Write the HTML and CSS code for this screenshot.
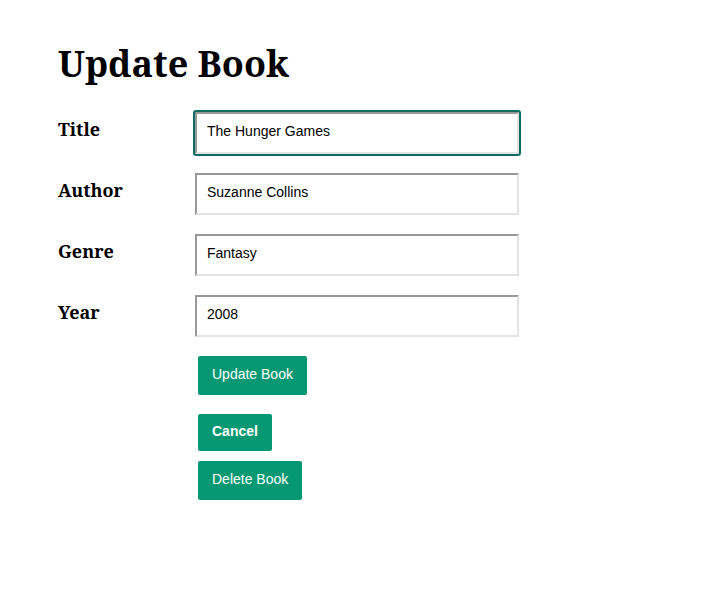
FILE: index.html
```html
<!DOCTYPE html>
<html>
<head>
<meta charset="utf-8">
<link rel="stylesheet" href="styles.css">
</head>
<body>
<main class="page">
  <h1 class="title">Update Book</h1>
  <form class="form">
    <label class="label" for="t">Title</label>
    <input class="field field-focus" id="t" type="text" value="The Hunger Games">
    <label class="label" for="a">Author</label>
    <input class="field" id="a" type="text" value="Suzanne Collins">
    <label class="label" for="g">Genre</label>
    <input class="field" id="g" type="text" value="Fantasy">
    <label class="label" for="y">Year</label>
    <input class="field" id="y" type="text" value="2008">
    <div class="actions">
      <button class="btn" type="button">Update Book</button>
      <button class="btn btn-bold" type="button">Cancel</button>
      <button class="btn" type="button">Delete Book</button>
    </div>
  </form>
</main>
</body>
</html>
```
FILE: styles.css
```css
body {
  margin: 0;
  background: #fff;
  font-family: "Noto Serif", "DejaVu Serif", serif;
  color: #000;
}
.page {
  padding: 42px 58px;
}
.title {
  margin: 0 0 27px 0;
  font-size: 36px;
  font-weight: bold;
  line-height: 1.2;
}
.form {
  display: grid;
  grid-template-columns: 137px 324px;
  row-gap: 19px;
  align-items: start;
}
.label {
  font-weight: bold;
  font-size: 18px;
  line-height: 24px;
  padding-top: 5px;
}
.field {
  box-sizing: border-box;
  width: 324px;
  height: 42px;
  margin: 0;
  padding: 0 10px 5px 10px;
  font-family: "Liberation Sans", Arial, sans-serif;
  font-size: 14px;
  color: #000;
  border: 2px solid #999;
  border-right-color: #e3e3e3;
  border-bottom-color: #e3e3e3;
  background: #fff;
}
.field-focus {
  outline: 2px solid #0c6d62;
  border-radius: 1px;
  outline-offset: 0;
}
.actions {
  grid-column: 2;
  display: flex;
  flex-direction: column;
  align-items: flex-start;
  padding-left: 3px;
  margin-top: 0;
}
.btn {
  font-family: "Liberation Sans", Arial, sans-serif;
  font-size: 14px;
  color: #fff;
  background: #069873;
  border: 0;
  border-radius: 2px;
  padding: 0 14px 3px 14px;
  height: 39px;
  margin-bottom: 19px;
}
.btn-bold {
  font-weight: bold;
  height: 37px;
  margin-bottom: 10px;
}
```
